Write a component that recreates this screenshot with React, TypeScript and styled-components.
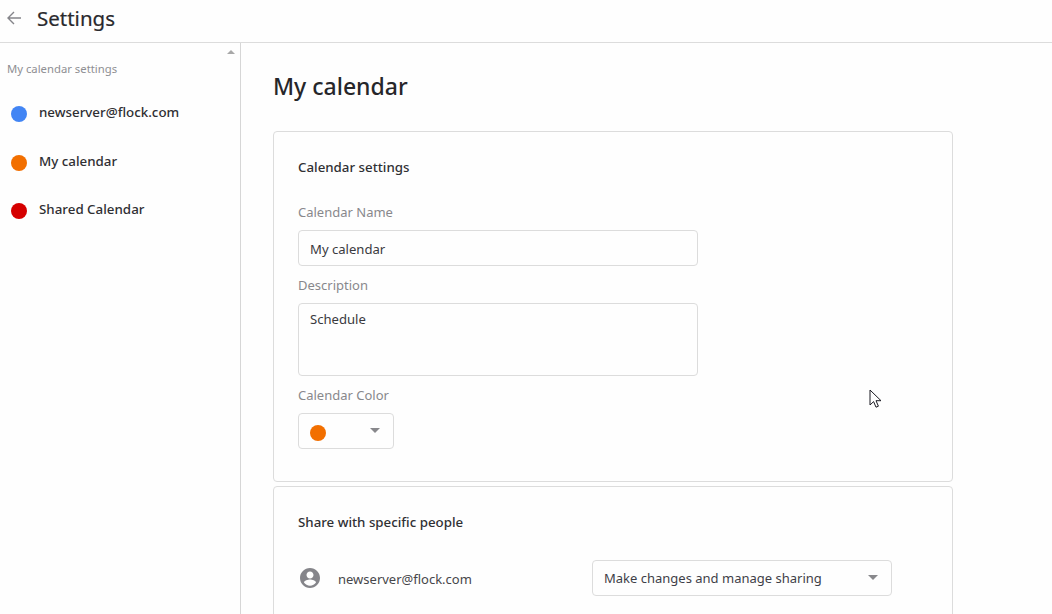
import React from "react";
import styled, { createGlobalStyle } from "styled-components";

const Global = createGlobalStyle`
  html, body { margin: 0; padding: 0; height: 100%; overflow: hidden; background: #fefefe; }
  body { font-family: "Noto Sans", "Open Sans", sans-serif; color: #2a2a2e; }
  #root { height: 614px; }
`;
const Page = styled.div`
  width: 1052px; height: 614px; display: flex; flex-direction: column; position: relative; overflow: hidden;
`;
const Header = styled.header`
  height: 42px; flex: none; border-bottom: 1px solid #dcdcdc; display: flex; align-items: center; padding-left: 6px; gap: 15px;
`;
const Back = styled.svg`width: 16px; height: 16px; flex: none; margin-top: -6px;`;
const Title = styled.h1`
  margin: -7px 0 0; font-size: 20.5px; font-weight: 400; line-height: 28px; -webkit-text-stroke: 0.2px #26262a;
`;
const Body = styled.div`flex: 1; display: flex; min-height: 0;`;
const Sidebar = styled.aside`
  width: 233px; flex: none; border-right: 1px solid #d6d6d6; position: relative; padding: 17px 0 0 7px;
`;
const ScrollUp = styled.span`
  position: absolute; top: 7px; right: 5px; width: 0; height: 0;
  border-left: 4px solid transparent; border-right: 4px solid transparent; border-bottom: 4px solid #a8a8a8;
`;
const SideHeading = styled.div`font-size: 11.3px; line-height: 17px; color: #8f8f93;`;
const NavList = styled.div`display: flex; flex-direction: column; gap: 30.5px; margin-top: 26px;`;
const NavItem = styled.div`
  display: flex; align-items: center; gap: 12px; padding-left: 4px; height: 18px; font-size: 13.35px; font-weight: 500; color: #2f2f33;
`;
const Dot = styled.span<{ $color: string }>`
  width: 16px; height: 16px; border-radius: 50%; background: ${(p) => p.$color}; flex: none; margin-top: 4px;
`;
const Main = styled.main`flex: 1; padding: 26px 0 0 32px; min-width: 0;`;
const PageTitle = styled.h2`
  margin: 0; font-size: 23px; font-weight: 500; line-height: 34px; color: #26262a;
`;
const Card = styled.section`
  width: 680px; box-sizing: border-box; border: 1px solid #dcdcdc; border-radius: 4px; padding: 24px;
`;
const FirstCard = styled(Card)`margin-top: 28px; height: 351px;`;
const SecondCard = styled(Card)`margin-top: 4px; height: 200px;`;
const CardTitle = styled.h3`margin: 0; font-size: 13.3px; line-height: 22px; font-weight: 500; color: #303034;`;
const Label = styled.div`font-size: 13px; line-height: 18px; color: #88888c;`;
const NameLabel = styled(Label)`margin-top: 25px;`;
const Field = styled.div`
  width: 400px; box-sizing: border-box; border: 1px solid #dcdcdc; border-radius: 4px;
  font-size: 13.1px; line-height: 18px; color: #3a3a3e; padding: 0 11px;
`;
const NameField = styled(Field)`height: 36px; margin: 9px 0 10px; padding-top: 2px; display: flex; align-items: center;`;
const DescField = styled(Field)`height: 73px; margin: 9px 0 10px; padding-top: 6px;`;
const ColorSelect = styled.div`
  margin-top: 9px; width: 96px; height: 36px; box-sizing: border-box; border: 1px solid #dcdcdc; border-radius: 4px;
  display: flex; align-items: center; justify-content: space-between; padding: 0 13px 0 11px;
`;
const Caret = styled.span`
  width: 0; height: 0; border-left: 5px solid transparent; border-right: 5px solid transparent; border-top: 5px solid #88888c; margin-top: -2px;
`;
const ShareRow = styled.div`display: flex; align-items: center; margin-top: 27px;`;
const Avatar = styled.svg`width: 24px; height: 24px; flex: none; margin: 0 16px 0 0;`;
const Email = styled.div`width: 254px; flex: none; font-size: 13px; color: #46464a; margin-top: 1px;`;
const PermSelect = styled.div`
  width: 300px; height: 36px; box-sizing: border-box; border: 1px solid #dcdcdc; border-radius: 4px;
  display: flex; align-items: center; justify-content: space-between; padding: 0 13px 0 11px;
  font-size: 13px; color: #3e3e48;
`;
const Cursor = styled.svg`position: absolute; left: 869px; top: 389px; width: 13px; height: 20px;`;

export default function App() {
  return (
    <Page>
      <Global />
      <Header>
        <Back viewBox="0 0 16 16" fill="none" stroke="#85858a" strokeWidth="1.4">
          <path d="M15 8H2M8 2L2 8l6 6" />
        </Back>
        <Title>Settings</Title>
      </Header>
      <Body>
        <Sidebar>
          <ScrollUp />
          <SideHeading>My calendar settings</SideHeading>
          <NavList>
            <NavItem><Dot $color="#4285f4" />newserver@flock.com</NavItem>
            <NavItem><Dot $color="#f26f00" />My calendar</NavItem>
            <NavItem><Dot $color="#d50000" />Shared Calendar</NavItem>
          </NavList>
        </Sidebar>
        <Main>
          <PageTitle>My calendar</PageTitle>
          <FirstCard>
            <CardTitle>Calendar settings</CardTitle>
            <NameLabel>Calendar Name</NameLabel>
            <NameField>My calendar</NameField>
            <Label>Description</Label>
            <DescField>Schedule</DescField>
            <Label>Calendar Color</Label>
            <ColorSelect><Dot $color="#f26f00" /><Caret /></ColorSelect>
          </FirstCard>
          <SecondCard>
            <CardTitle>Share with specific people</CardTitle>
            <ShareRow>
              <Avatar viewBox="0 0 24 24" fill="#85858a">
                <path d="M12 2C6.48 2 2 6.48 2 12s4.48 10 10 10 10-4.48 10-10S17.52 2 12 2zm0 3.5c1.93 0 3.5 1.57 3.5 3.5S13.93 12.5 12 12.5 8.5 10.93 8.5 9 10.07 5.5 12 5.5zm0 14.2c-2.5 0-4.71-1.28-6-3.22.03-1.99 4-3.08 6-3.08s5.97 1.09 6 3.08c-1.29 1.94-3.5 3.22-6 3.22z" />
              </Avatar>
              <Email>newserver@flock.com</Email>
              <PermSelect>Make changes and manage sharing<Caret /></PermSelect>
            </ShareRow>
          </SecondCard>
        </Main>
      </Body>
      <Cursor viewBox="0 0 13 20">
        <path d="M1 1v15l3.6-3.4 2.4 5.6 2.4-1-2.4-5.5H12z" fill="#fff" stroke="#1a1a22" strokeWidth="1" />
      </Cursor>
    </Page>
  );
}
